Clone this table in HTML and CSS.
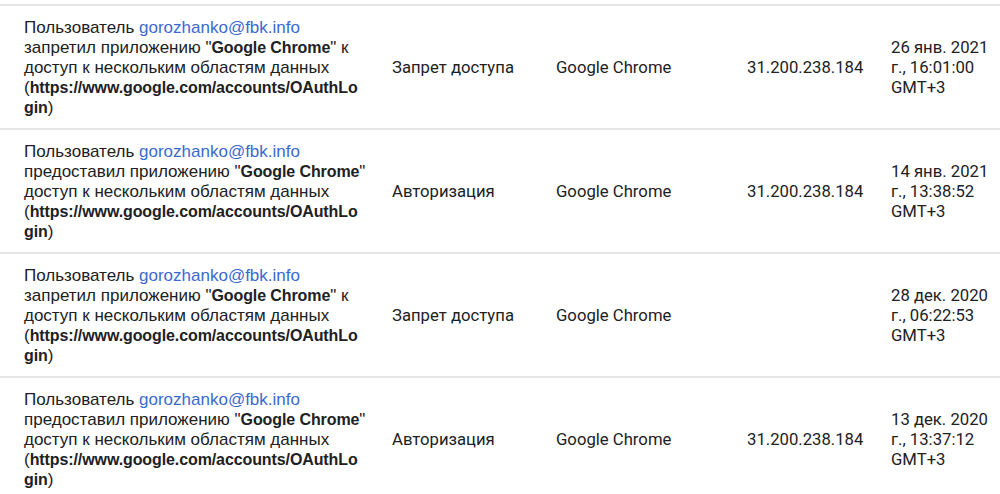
FILE: index.html
```html
<!DOCTYPE html>
<html lang="ru">
<head>
<meta charset="utf-8">
<title>Журнал</title>
<link rel="stylesheet" href="styles.css">
</head>
<body>
<div class="table">
  <div class="row">
    <div class="cell desc">Пользователь <a class="link" href="#">gorozhanko@fbk.info</a> запретил приложению "<b>Google Chrome</b>" к доступ к нескольким областям данных (<b>https://www.google.com/accounts/OAuthLogin</b>)</div>
    <div class="cell">Запрет доступа</div>
    <div class="cell">Google Chrome</div>
    <div class="cell">31.200.238.184</div>
    <div class="cell date">26 янв. 2021 г., 16:01:00 GMT+3</div>
  </div>
  <div class="row">
    <div class="cell desc">Пользователь <a class="link" href="#">gorozhanko@fbk.info</a> предоставил приложению "<b>Google Chrome</b>" доступ к нескольким областям данных (<b>https://www.google.com/accounts/OAuthLogin</b>)</div>
    <div class="cell">Авторизация</div>
    <div class="cell">Google Chrome</div>
    <div class="cell">31.200.238.184</div>
    <div class="cell date">14 янв. 2021 г., 13:38:52 GMT+3</div>
  </div>
  <div class="row">
    <div class="cell desc">Пользователь <a class="link" href="#">gorozhanko@fbk.info</a> запретил приложению "<b>Google Chrome</b>" к доступ к нескольким областям данных (<b>https://www.google.com/accounts/OAuthLogin</b>)</div>
    <div class="cell">Запрет доступа</div>
    <div class="cell">Google Chrome</div>
    <div class="cell"></div>
    <div class="cell date">28 дек. 2020 г., 06:22:53 GMT+3</div>
  </div>
  <div class="row">
    <div class="cell desc">Пользователь <a class="link" href="#">gorozhanko@fbk.info</a> предоставил приложению "<b>Google Chrome</b>" доступ к нескольким областям данных (<b>https://www.google.com/accounts/OAuthLogin</b>)</div>
    <div class="cell">Авторизация</div>
    <div class="cell">Google Chrome</div>
    <div class="cell">31.200.238.184</div>
    <div class="cell date">13 дек. 2020 г., 13:37:12 GMT+3</div>
  </div>
</div>
</body>
</html>
```
FILE: styles.css
```css
html, body {
  margin: 0;
  padding: 0;
  background: #ffffff;
}
body {
  padding-top: 4px;
  font-family: Roboto, "Noto Sans", sans-serif;
  color: #202124;
}
.table {
  border-top: 2px solid #e6e6e6;
}
.row {
  display: grid;
  grid-template-columns: 368px 164px 191px 144px 1fr;
  align-items: center;
  border-bottom: 2px solid #e6e6e6;
  height: 124px;
  padding-top: 2px;
  box-sizing: border-box;
}
.cell {
  padding-left: 24px;
  font-size: 16.7px;
  line-height: 20px;
}
.desc {
  font-family: "Liberation Sans", Arial, sans-serif;
  font-size: 17px;
  width: 343px;
  overflow-wrap: anywhere;
}
.desc b {
  font-weight: bold;
  font-size: 16px;
  letter-spacing: -0.1px;
}
.link {
  color: #3a6ad0;
  text-decoration: none;
}
.date {
  padding-right: 4px;
}
```
